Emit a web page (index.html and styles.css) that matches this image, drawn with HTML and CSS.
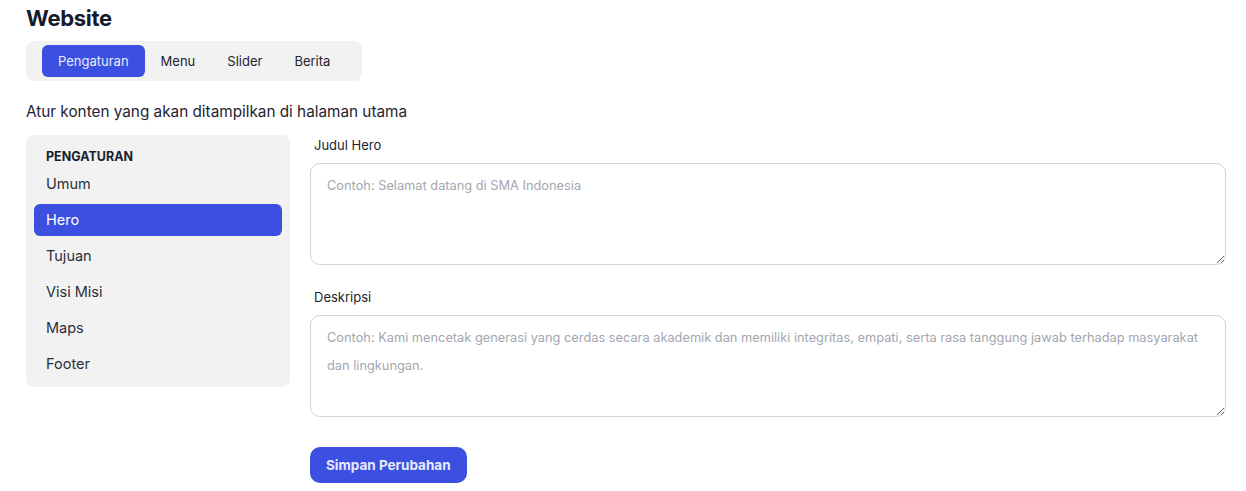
FILE: index.html
```html
<!DOCTYPE html>
<html lang="id">
<head>
  <meta charset="UTF-8">
  <meta name="viewport" content="width=device-width, initial-scale=1.0">
  <title>Website</title>
  <link rel="stylesheet" href="styles.css">
</head>
<body>
  <div class="page">
    <h1 class="title">Website</h1>

    <div class="tabs">
      <a href="#" class="tab active">Pengaturan</a>
      <a href="#" class="tab">Menu</a>
      <a href="#" class="tab">Slider</a>
      <a href="#" class="tab">Berita</a>
    </div>

    <p class="subtitle">Atur konten yang akan ditampilkan di halaman utama</p>

    <div class="content">
      <div class="sidebar">
        <div class="sidebar-head">PENGATURAN</div>
        <a href="#" class="side-item">Umum</a>
        <a href="#" class="side-item active">Hero</a>
        <a href="#" class="side-item">Tujuan</a>
        <a href="#" class="side-item">Visi Misi</a>
        <a href="#" class="side-item">Maps</a>
        <a href="#" class="side-item">Footer</a>
      </div>

      <form class="form">
        <div class="field">
          <label for="judul">Judul Hero</label>
          <textarea id="judul" rows="3" placeholder="Contoh: Selamat datang di SMA Indonesia"></textarea>
        </div>
        <div class="field">
          <label for="deskripsi">Deskripsi</label>
          <textarea id="deskripsi" rows="3" placeholder="Contoh: Kami mencetak generasi yang cerdas secara akademik dan memiliki integritas, empati, serta rasa tanggung jawab terhadap masyarakat dan lingkungan."></textarea>
        </div>
        <div class="actions">
          <button type="button" class="btn">Simpan Perubahan</button>
        </div>
      </form>
    </div>
  </div>
</body>
</html>
```

FILE: styles.css
```css
* {
box-sizing: border-box;
}
body {
margin: 0;
font-family: Inter, "Noto Sans", sans-serif;
color: #1f2330;
background-color: #ffffff;
}
.page {
padding: 4px 20px 0 26px;
}
.title {
margin: 0;
font-size: 22px;
font-weight: 700;
line-height: 28px;
color: #161b2c;
letter-spacing: -0.3px;
}
.tabs {
display: inline-flex;
margin-top: 9px;
padding: 4px 16px;
background-color: #f2f2f2;
border-radius: 8px;
}
.tab {
padding: 0 16px;
height: 32px;
line-height: 32px;
font-size: 13px;
color: #1f2330;
text-decoration: none;
border-radius: 6px;
}
.tab.active {
background-color: #3b4fe0;
color: #e8eaff;
}
.subtitle {
margin: 21px 0 13px;
font-size: 15.3px;
line-height: 20px;
}
.content {
display: flex;
gap: 20px;
align-items: flex-start;
}
.sidebar {
width: 264px;
flex-shrink: 0;
padding: 12px 8px 7px;
background-color: #f2f2f2;
border-radius: 8px;
display: flex;
flex-direction: column;
gap: 4px;
}
.sidebar-head {
padding: 0 12px;
margin-top: 1px;
font-size: 12.5px;
font-weight: 700;
line-height: 18px;
color: #1a1f2e;
}
.side-item {
padding: 0 12px;
height: 32px;
line-height: 32px;
font-size: 14.5px;
color: #2a2f3c;
text-decoration: none;
border-radius: 6px;
}
.sidebar-head + .side-item {
margin-top: -2px;
}
.side-item.active {
background-color: #3b4fe0;
color: #ffffff;
}
.form {
flex: 1;
display: flex;
flex-direction: column;
gap: 22px;
}
.field label {
display: block;
padding-left: 4px;
margin-bottom: 8px;
font-size: 13px;
line-height: 20px;
color: #1a1f2e;
}
.field textarea {
display: block;
width: 100%;
padding: 8px 16px;
font-family: inherit;
font-size: 12.8px;
line-height: 28px;
color: #1f2330;
border: 1px solid #d4d4d8;
border-radius: 10px;
resize: vertical;
}
.field textarea::placeholder {
color: #a3a6b0;
}
.actions {
padding-top: 8px;
}
.btn {
height: 36px;
padding: 0 16px;
font-family: inherit;
font-size: 13.5px;
font-weight: 700;
color: #e8eaff;
background-color: #3b4fe0;
border: none;
border-radius: 10px;
}
```
